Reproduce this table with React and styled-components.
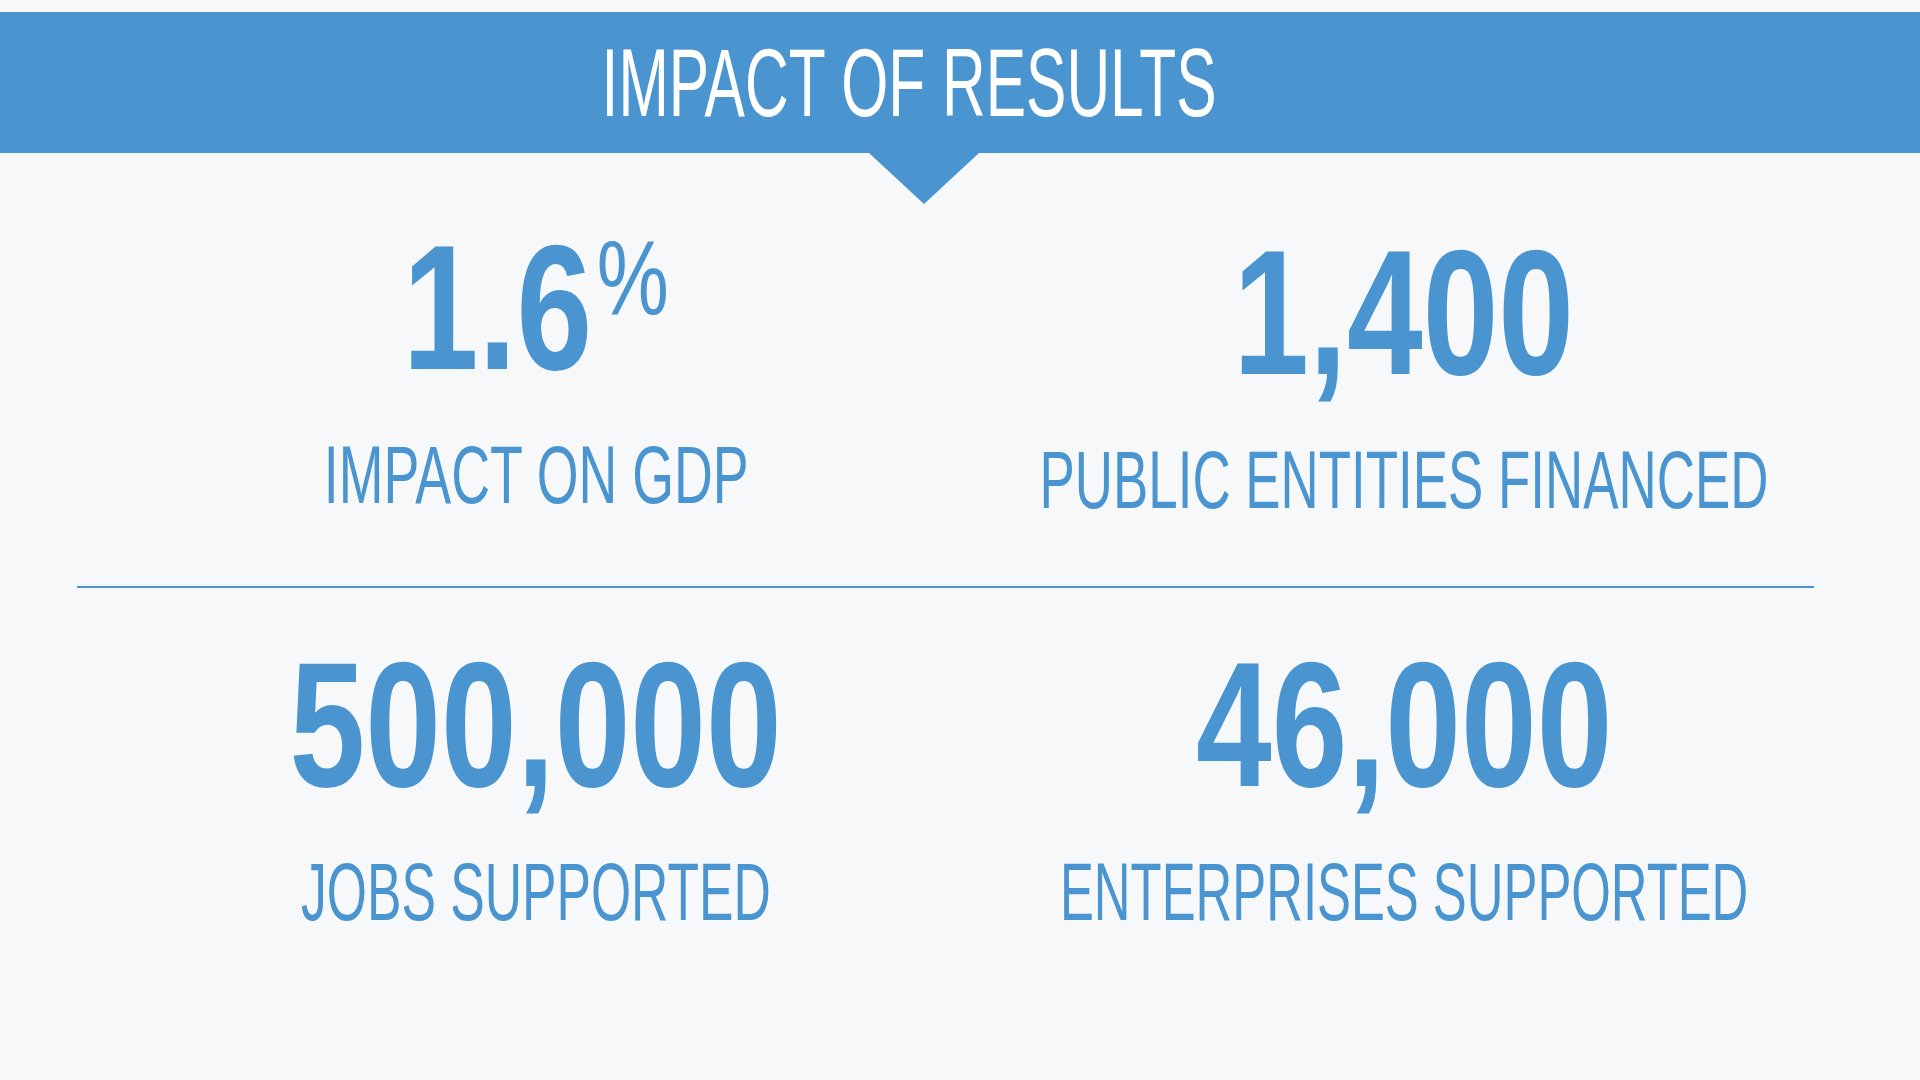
import styled, { createGlobalStyle } from 'styled-components'

const GlobalStyle = createGlobalStyle`
  html, body {
    margin: 0;
    padding: 0;
    background: #f6f8fa;
  }
  body {
    font-family: "Liberation Sans", Arial, sans-serif;
  }
`

const BLUE = '#4a95d0'

const Page = styled.div`
  width: 1920px;
  height: 1080px;
  overflow: hidden;
  background: #f6f8fa;
  padding-top: 12px;
  box-sizing: border-box;
`

const Banner = styled.header`
  position: relative;
  height: 141px;
  background: ${BLUE};
  display: flex;
  align-items: center;
  justify-content: center;
  padding-right: 102px;
  &::after{
    content: '';
    position: absolute;
    left: 869px;
    top: 141px;
    border-left: 55px solid transparent;
    border-right: 55px solid transparent;
    border-top: 51px solid ${BLUE};
  }
`

// no condensed face is installed, so the narrow look comes from scaleX
const Title = styled.h1`
  margin: 0;
  color: #fff;
  font-weight: normal;
  font-size: 96px;
  line-height: 1;
  display: inline-block;
  white-space: nowrap;
  transform: scaleX(0.63);
`

const Row = styled.section`
  display: grid;
  grid-template-columns: 868px 868px;
  padding-left: 102px;
  padding-top: ${p => p.$top}px;
`

const Stat = styled.div`
  display: flex;
  flex-direction: column;
  align-items: center;
  gap: 37px;
  padding-top: ${p => p.$shift || 0}px;
`

const Number = styled.div`
  color: ${BLUE};
  font-weight: bold;
  font-size: 178px;
  line-height: 1;
  white-space: nowrap;
  display: inline-block;
  transform: scaleX(0.765);
`

const Percent = styled.span`
  display: inline-block;
  vertical-align: top;
  margin-top: 5px;
  font-weight: normal;
  font-size: 106px;
  line-height: 1;
  margin-left: 6px;
`

const Label = styled.div`
  color: ${BLUE};
  font-size: 82px;
  line-height: 1;
  white-space: nowrap;
  display: inline-block;
  transform: scaleX(${p => p.$squeeze || 0.64});
`

const Divider = styled.hr`
  margin: 65px 0 0 77px;
  width: 1737px;
  height: 2px;
  border: none;
  background: ${BLUE};
`

const stats = [
  [
    { value: '1.6', unit: '%', label: 'IMPACT ON GDP', squeeze: 0.655 },
    { value: '1,400', label: 'PUBLIC ENTITIES FINANCED', squeeze: 0.645, shift: 5 },
  ],
  [
    { value: '500,000', label: 'JOBS SUPPORTED', squeeze: 0.63 },
    { value: '46,000', label: 'ENTERPRISES SUPPORTED', squeeze: 0.62 },
  ],
]

const App = () => {
  return (
    <Page>
      <GlobalStyle />
      <Banner>
        <Title>IMPACT OF RESULTS</Title>
      </Banner>

      <Row $top={66}>
        {stats[0].map(s => (
          <Stat key={s.label} $shift={s.shift}>
            <Number>
              {s.value}
              {s.unit && <Percent>{s.unit}</Percent>}
            </Number>
            <Label $squeeze={s.squeeze}>{s.label}</Label>
          </Stat>
        ))}
      </Row>

      <Divider />

      <Row $top={48}>
        {stats[1].map(s => (
          <Stat key={s.label}>
            <Number>{s.value}</Number>
            <Label $squeeze={s.squeeze}>{s.label}</Label>
          </Stat>
        ))}
      </Row>
    </Page>
  )
}

export default App
